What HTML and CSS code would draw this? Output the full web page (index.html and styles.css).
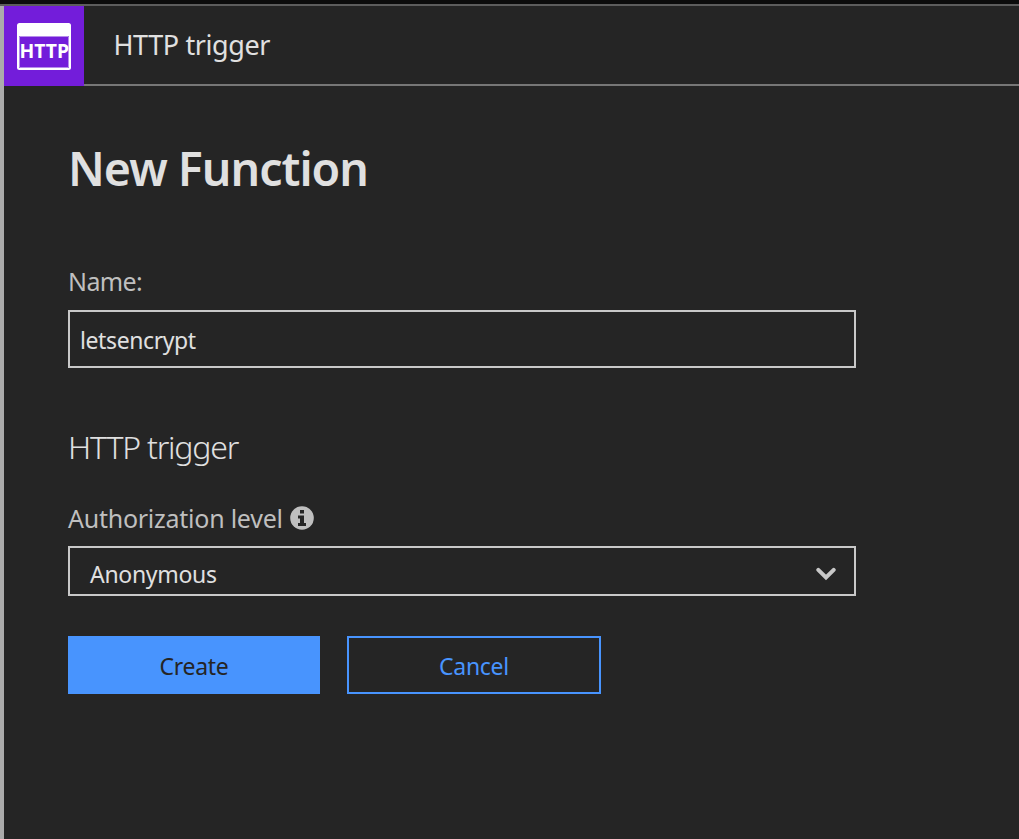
FILE: index.html
```html
<!DOCTYPE html>
<html lang="en">
<head>
<meta charset="utf-8">
<title>New Function</title>
<link rel="stylesheet" href="styles.css">
</head>
<body>
<div class="panel">
  <header class="header">
    <div class="tile">
      <svg class="tile-icon" width="80" height="80" viewBox="0 0 80 80">
        <rect x="13" y="17" width="54" height="47" rx="2.5" fill="#fff"/>
        <path d="M15 30H65V62H15Z" fill="#731dda"/>
        <path d="M15.500 30.500H64.500V61.500H15.500Z" fill="none" stroke="#b68ceb"/>
        <text class="tile-text" x="15.500" y="52.300" textLength="49.500" lengthAdjust="spacingAndGlyphs">HTTP</text>
      </svg>
    </div>
    <div class="header-bar"><span class="header-title">HTTP trigger</span></div>
  </header>
  <main class="content">
    <h1 class="title">New Function</h1>
    <label class="label label-name" for="name">Name:</label>
    <input class="input" id="name" type="text" value="letsencrypt" spellcheck="false">
    <h2 class="subtitle">HTTP trigger</h2>
    <div class="label label-auth">
      <span class="auth-text">Authorization level</span>
      <svg class="info" width="24" height="24" viewBox="0 0 24 24">
        <circle cx="12" cy="12" r="11.800" fill="#bfbfbf"/>
        <path d="M10 4H14V7.500H10ZM8 9.500H14V17H16V20H8V17H10V12.500H8Z" fill="#252525"/>
      </svg>
    </div>
    <div class="select" role="combobox" tabindex="0">
      <span class="select-text">Anonymous</span>
      <svg class="chevron" width="20" height="14" viewBox="0 0 20 14"><path d="M2.300 2.800L10 10.500L17.700 2.800" fill="none" stroke="#c8c8c8" stroke-width="4" stroke-linecap="round"/></svg>
    </div>
    <div class="actions">
      <button class="button create">Create</button>
      <button class="button cancel">Cancel</button>
    </div>
  </main>
</div>
</body>
</html>
```
FILE: styles.css
```css
* { box-sizing: border-box; }
body {
  margin: 0;
  height: 839px;
  overflow: hidden;
  background: #252525;
  border-top: 4px solid #0c0c0c;
  color: #e0e0e0;
  font-family: "Noto Sans", "Open Sans", sans-serif;
}
.panel {
  height: 835px;
  border-top: 2px solid #5d5d5d;
  background: linear-gradient(#ababab, #ababab) 0 0 / 4px 100% no-repeat;
  padding-left: 4px;
}
.header { display: flex; height: 80px; }
.tile { width: 80px; height: 80px; background: #731dda; }
.tile-icon { display: block; }
.tile-text { font-size: 19px; font-weight: 700; fill: #fff; }
.header-bar {
  flex: 1;
  border-bottom: 2px solid #777;
  padding-left: 29.5px;
}
.header-title { display: block; font-size: 27px; line-height: 78px; letter-spacing: -0.4px; }
.content { display: flex; flex-direction: column; padding-left: 64px; width: 852px; }
.title {
  margin: 50px 0 0;
  font-size: 46.5px;
  line-height: 64px;
  font-weight: 600;
  letter-spacing: -1px;
}
.label { height: 36px; font-size: 25px; line-height: 37px; color: #bfbfbf; }
.label-name { margin-top: 63px; letter-spacing: -0.6px; }
.input {
  margin-top: 11px;
  height: 58px;
  padding: 2px 10px 0;
  border: 2px solid #c8c8c8;
  border-radius: 0;
  outline: 0;
  background: transparent;
  color: #e0e0e0;
  font: 23px "Noto Sans", sans-serif;
  letter-spacing: -0.4px;
}
.subtitle {
  margin: 57px 0 0;
  font-size: 32px;
  line-height: 44px;
  font-weight: 300;
  letter-spacing: -1.2px;
}
.label-auth { display: flex; align-items: center; gap: 8px; margin-top: 31px; }
.auth-text { width: 214px; white-space: nowrap; letter-spacing: -0.25px; }
.select {
  display: flex;
  align-items: center;
  justify-content: space-between;
  margin-top: 10px;
  height: 50px;
  padding: 0 18px 0 20px;
  border: 2px solid #c8c8c8;
}
.select-text { padding-top: 6px; font-size: 23px; line-height: 34px; letter-spacing: -0.3px; }
.chevron { margin-top: 5px; }
.actions { display: flex; gap: 27px; margin-top: 40px; }
.button {
  width: 252px;
  height: 58px;
  padding: 2px 0 0;
  border: 2px solid #4894fe;
  font: 23px "Noto Sans", sans-serif;
  letter-spacing: -0.3px;
}
.create { background: #4894fe; color: #252525; }
.cancel { width: 254px; background: transparent; color: #4894fe; }
```
